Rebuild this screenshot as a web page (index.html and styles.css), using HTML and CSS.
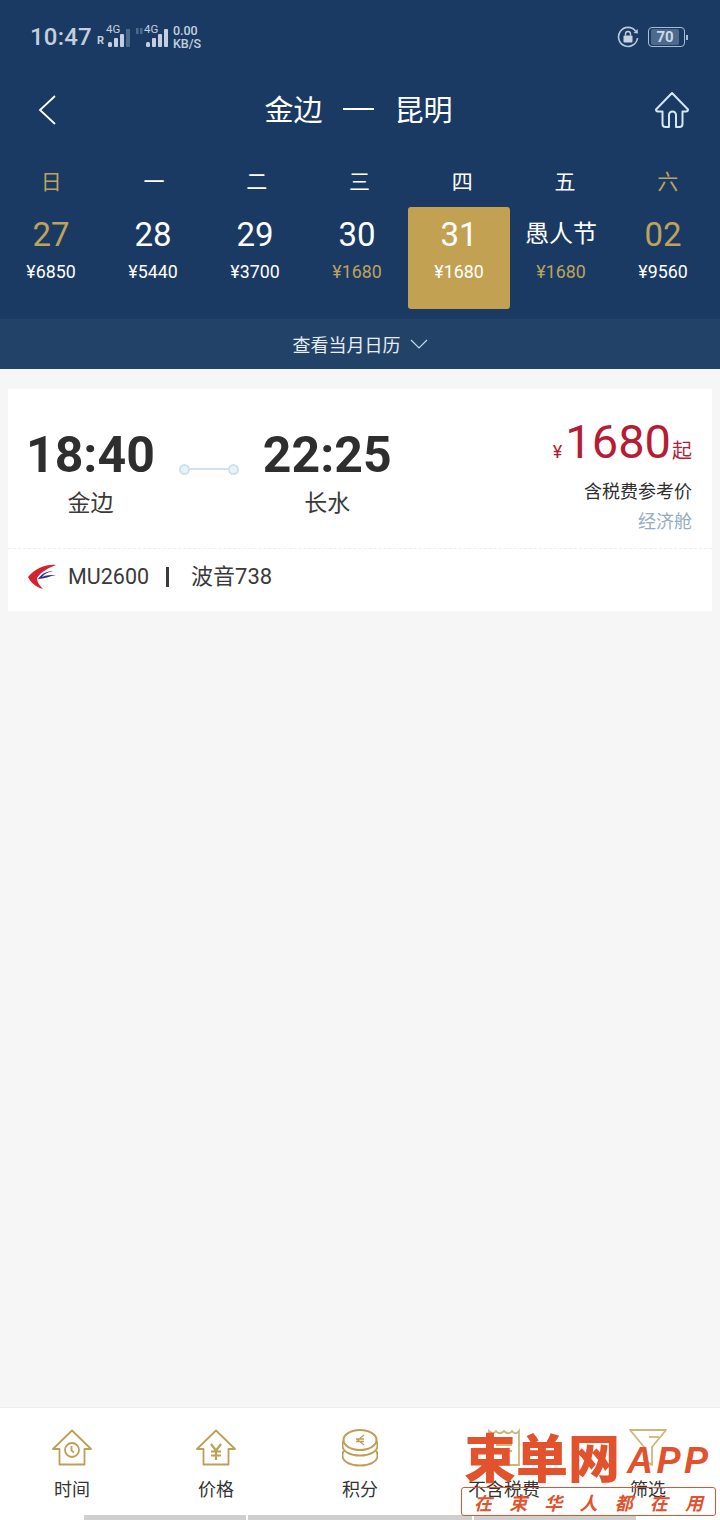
FILE: index.html
```html
<!DOCTYPE html>
<html lang="zh">
<head>
<meta charset="utf-8">
<title>金边 — 昆明</title>
<link rel="stylesheet" href="styles.css">
</head>
<body>
<div class="page">
  <header class="top">
    <div class="status">
      <div class="status-left">
        <span class="clock">10:47</span>
        <span class="roam">R</span>
        <span class="sig">
          <span class="sig-label">4G</span>
          <svg width="24" height="19" viewBox="0 0 24 19"><g fill="#c3cfde"><rect x="0" y="13" width="4" height="5" rx="1.500"/><rect x="6" y="9" width="4" height="9" rx="1"/><rect x="12" y="5" width="4" height="13" rx="1"/></g><rect x="18" y="0" width="4" height="18" rx="1" fill="#4d6a8d"/></svg>
        </span>
        <svg class="dim" width="9" height="18" viewBox="0 0 9 18"><g fill="#4d6a8d"><rect x="1" y="0" width="2.500" height="6"/><rect x="5" y="0" width="2.500" height="6"/></g></svg>
        <span class="sig">
          <span class="sig-label">4G</span>
          <svg width="24" height="19" viewBox="0 0 24 19"><g fill="#c3cfde"><rect x="0" y="13" width="4" height="5" rx="1.500"/><rect x="6" y="9" width="4" height="9" rx="1"/><rect x="12" y="5" width="4" height="13" rx="1"/><rect x="18" y="0" width="4" height="18" rx="1"/></g></svg>
        </span>
        <span class="speed"><span>0.00</span><span>KB/S</span></span>
      </div>
      <div class="status-right">
        <svg width="22" height="22" viewBox="0 0 22 22" fill="none"><path d="M18.500 5A9.500 9.500 0 1 0 20.500 12" stroke="#b9c9dc" stroke-width="1.600"/><path d="M16.500 7l4.500.5-.5-4.500z" fill="#b9c9dc"/><rect x="6.500" y="9.500" width="9" height="7" rx="1" fill="#c9d3e0"/><path d="M8.500 9.500V8a2.500 2.500 0 0 1 5 0v1.500" stroke="#c9d3e0" stroke-width="1.300"/></svg>
        <div class="battery"><span class="batt-fill">70</span></div><span class="batt-tip"></span>
      </div>
    </div>
    <nav class="nav">
      <svg class="back" width="20" height="32" viewBox="0 0 20 32" fill="none"><path d="M18 2L3 16l15 14" stroke="#fff" stroke-width="1.800"/></svg>
      <h1 class="route"><span>金边</span><span class="dash"></span><span>昆明</span></h1>
      <svg class="home" width="36" height="38" viewBox="0 0 36 38" fill="none" stroke="#d5e6f7" stroke-width="2" stroke-linejoin="round"><path d="M18 2L2 18.500c0 1.500 1 2 2 2h4.500V33c0 2 1 3 3 3h3.500V24a3.500 3.500 0 0 1 7 0v12h3.500c2 0 3-1 3-3V20.500H32c1 0 2-.5 2-2z"/></svg>
    </nav>
    <div class="week">
      <span class="gold">日</span><span>一</span><span>二</span><span>三</span><span>四</span><span>五</span><span class="gold">六</span>
    </div>
    <div class="dates">
      <div class="day"><span class="num gold">27</span><span class="fare">¥6850</span></div>
      <div class="day"><span class="num">28</span><span class="fare">¥5440</span></div>
      <div class="day"><span class="num">29</span><span class="fare">¥3700</span></div>
      <div class="day"><span class="num">30</span><span class="fare gold">¥1680</span></div>
      <div class="day selected"><span class="num">31</span><span class="fare">¥1680</span></div>
      <div class="day"><span class="num holiday">愚人节</span><span class="fare gold">¥1680</span></div>
      <div class="day"><span class="num gold">02</span><span class="fare">¥9560</span></div>
    </div>
    <div class="month">
      <span>查看当月日历</span>
      <svg width="18" height="11" viewBox="0 0 18 11" fill="none"><path d="M1 1l8 8 8-8" stroke="#c5d8ec" stroke-width="1.200"/></svg>
    </div>
  </header>

  <main class="list">
    <article class="card">
      <div class="card-main">
        <div class="stop">
          <span class="time">18:40</span>
          <span class="city">金边</span>
        </div>
        <div class="link"><i></i><b></b><i></i></div>
        <div class="stop">
          <span class="time">22:25</span>
          <span class="city">长水</span>
        </div>
        <div class="price">
          <div class="amount"><span class="yen">¥</span><span class="value">1680</span><span class="from">起</span></div>
          <div class="tax">含税费参考价</div>
          <div class="cabin">经济舱</div>
        </div>
      </div>
      <div class="card-foot">
        <svg width="28" height="26" viewBox="0 0 28 26"><path d="M28 1C18 0 8 4 0 13c3 6 8 10 15 12-3-3-6-7-6-11C13 8 20 4 28 1z" fill="#d3232e"/><path d="M10 15c4-6 10-8 15-8-5 1-9 3-11 6 4-2 9-2 14-2-6 1-12 4-18 4z" fill="#2d2f86"/></svg>
        <span>MU2600</span><span class="bar"></span><span class="plane">波音738</span>
      </div>
    </article>
  </main>

  <footer class="tabs">
    <div class="tab-row">
      <div class="tab">
        <svg class="tab-icon" width="40" height="38" viewBox="0 0 40 38" fill="none" stroke="#bd9f57" stroke-width="1.800" stroke-linejoin="round"><path d="M20 1.500L1 20h6.500v15.500h25V20H39z"/><circle cx="20" cy="21" r="7"/><path d="M19.500 17v4.500l2.500 2"/></svg>
        <span>时间</span>
      </div>
      <div class="tab">
        <svg class="tab-icon" width="40" height="38" viewBox="0 0 40 38" fill="none" stroke="#bd9f57" stroke-linejoin="round"><path stroke-width="1.800" d="M20 1.500L1 20h6.500v15.500h25V20H39z"/><path stroke-width="2.200" d="M15 15l5 6.500 5-6.500M20 21.500V31M15 22.500h10M15 26.500h10"/></svg>
        <span>价格</span>
      </div>
      <div class="tab">
        <svg class="tab-icon" width="36" height="38" viewBox="0 0 36 38" fill="none" stroke="#bd9f57" stroke-width="2"><ellipse cx="18" cy="11" rx="16.500" ry="10"/><path d="M1.500 12c-1 2-1 3-1 5 0 5.500 8 9.500 17.500 9.500S35.500 22.500 35.500 17c0-2 0-3-1-5M1.500 22c-1 2-1 3-1 5 0 5.500 8 9.500 17.500 9.500S35.500 32.500 35.500 27c0-2 0-3-1-5"/><path d="M22 6l-6 5 6 5M14 10h8M14 12.500h8" stroke-width="1.300"/></svg>
        <span>积分</span>
      </div>
      <div class="tab">
        <svg class="tab-icon" width="34" height="38" viewBox="0 0 34 38" fill="none" stroke="#cdb778" stroke-width="1.800"><path d="M2 2c3 3 5 3 7 0 2 3 5 3 8 0 3 3 6 3 8 0 2 3 5 3 7 0v34H2z"/><path d="M9 16h16M9 22h16"/></svg>
        <span>不含税费</span>
      </div>
      <div class="tab">
        <svg class="tab-icon" width="38" height="38" viewBox="0 0 38 38" fill="none" stroke="#cdb778" stroke-width="1.800" stroke-linejoin="round"><path d="M1 1h36L23 18v18l-8-5V18z"/><path d="M20 8h10"/></svg>
        <span>筛选</span>
      </div>
    </div>
    <div class="handle"><i></i><i class="wide"></i><i></i></div>
  </footer>

  <aside class="mark">
    <div class="mark-title"><span class="mark-cn">束单网</span><span class="mark-en">APP</span></div>
    <div class="mark-sub"><span>在</span><span>束</span><span>华</span><span>人</span><span>都</span><span>在</span><span>用</span></div>
  </aside>
</div>
</body>
</html>
```
FILE: styles.css
```css
* { box-sizing: border-box; }
html, body { margin: 0; padding: 0; }
body {
  width: 720px;
  height: 1520px;
  overflow: hidden;
  font-family: Roboto, "Noto Sans CJK SC", sans-serif;
}
.page {
  position: relative;
  width: 720px;
  height: 1520px;
  display: flex;
  flex-direction: column;
  background: #f6f6f6;
}
.top { background: #1a3a64; color: #fff; }
.gold { color: #bda35c; }

.status {
  height: 72px;
  display: flex;
  justify-content: space-between;
  align-items: center;
  padding: 2px 32px 0 30px;
  color: #c3cfde;
}
.status-left, .status-right { display: flex; align-items: center; }
.clock { font-size: 24px; font-weight: 500; letter-spacing: .2px; }
.roam { font-size: 11px; font-weight: 700; margin: 7px 2px 0 5px; }
.sig { position: relative; display: block; width: 26px; height: 19px; margin-top: 3px; }
.sig svg { position: absolute; left: 2px; top: 0; }
.sig-label { position: absolute; left: 0; top: -6px; font-size: 11.500px; line-height: 13px; }
.dim { margin: 0 0 0 3px; }
.speed {
  display: flex;
  flex-direction: column;
  font-size: 12.500px;
  font-weight: 500;
  line-height: 13px;
  margin-left: 3px;
}
.status-right svg { margin-right: 9px; }
.battery {
  width: 37px;
  height: 20px;
  border: 1px solid #a9bcd2;
  border-radius: 4px;
  padding: 1px;
}
.batt-fill {
  display: block;
  width: 28px;
  height: 16px;
  border-radius: 2px;
  background: #4d6a8d;
  color: #cdd8e5;
  font-size: 15px;
  font-weight: 700;
  line-height: 16px;
  text-align: center;
  margin-left: 1px;
}
.batt-tip { width: 2px; height: 5px; background: #a9bcd2; margin-left: 1px; }

.nav {
  height: 76px;
  display: flex;
  align-items: center;
  justify-content: space-between;
  padding: 0 30px 0 37px;
}
.route {
  margin: 0;
  display: flex;
  align-items: center;
  font-size: 29px;
  font-weight: 400;
  line-height: 40px;
  position: relative;
  left: 3px;
  top: 1px;
}
.dash { width: 31px; height: 2px; background: #fff; margin: 0 21px 0 20px; position: relative; top: -2px; }

.week {
  display: grid;
  grid-template-columns: repeat(7, 1fr);
  height: 59px;
  padding: 19px 1px 0 0;
  font-size: 21px;
  line-height: 30px;
  text-align: center;
}
.dates { display: flex; }
.day {
  width: 102px;
  height: 102px;
  display: flex;
  flex-direction: column;
  align-items: center;
  border-radius: 3px;
}
.selected { background: #c2a252; }
.num { font-size: 33px; line-height: 55px; height: 54px; }
.holiday { font-size: 24px; }
.fare { font-size: 17.800px; line-height: 22px; }

.month {
  margin-top: 10px;
  height: 50px;
  background: #234268;
  display: flex;
  align-items: center;
  justify-content: center;
  gap: 9px;
  font-size: 18px;
  color: #e6edf5;
}

.list { flex: 1; padding: 20px 8px 0; }
.card { background: #fff; height: 222px; }
.card-main {
  height: 160px;
  display: flex;
  padding: 0 20px 0 18px;
  border-bottom: 1px dashed #eeeeee;
  color: #2e2e2e;
}
.stop { display: flex; flex-direction: column; align-items: center; padding-top: 35px; }
.time { font-size: 50px; font-weight: 700; line-height: 62px; }
.city { font-size: 23px; line-height: 32px; color: #3a3a3a; margin-top: 2px; }
.link { display: flex; align-items: center; width: 60px; height: 16px; margin: 72px 24px 0 24px; }
.link i { width: 11px; height: 11px; border: 2px solid #cfe0ee; border-radius: 50%; background: #eaf2f8; flex: none; }
.link b { flex: 1; height: 2px; background: #d5e2ec; }
.price { margin-left: auto; display: flex; flex-direction: column; align-items: flex-end; padding-top: 22px; }
.amount { display: flex; align-items: baseline; color: #b71c35; height: 62px; }
.yen { font-size: 18px; margin-right: 3px; }
.value { font-size: 47px; line-height: 62px; }
.from { font-size: 20px; margin-left: 1px; }
.tax { font-size: 18px; line-height: 26px; color: #2e2e2e; margin-top: 6px; }
.cabin { font-size: 18px; line-height: 26px; color: #93adc3; margin-top: 4px; }
.card-foot {
  height: 61px;
  display: flex;
  align-items: center;
  padding: 0 0 5px 20px;
  font-size: 21.500px;
  color: #3a3a3a;
}
.card-foot span { line-height: 26px; height: 26px; }
.card-foot svg { margin-right: 12px; }
.card-foot .bar { width: 3px; height: 20px; background: #3a3a3a; margin: 0 22px 0 17px; }
.card-foot .plane { font-size: 22px; }

.tabs {
  height: 113px;
  background: #fff;
  border-top: 1px solid #ececec;
  display: flex;
  flex-direction: column;
}
.tab-row { flex: 1; display: flex; }
.tab {
  width: 144px;
  display: flex;
  flex-direction: column;
  align-items: center;
  padding-top: 20px;
  font-size: 18px;
  color: #333;
}
.tab-icon { height: 40px; }
.tab span { line-height: 26px; margin-top: 9px; }
.handle { height: 5px; display: flex; gap: 2px; padding-left: 84px; }
.handle i { width: 162px; background: #cfcfcf; }
.handle i.wide { width: 224px; }

.mark {
  position: absolute;
  left: 461px;
  top: 1434px;
  width: 255px;
  color: #e2522d;
}
.mark-title { display: flex; align-items: center; height: 53px; padding-left: 3px; }
.mark-cn { font-size: 52px; line-height: 53px; font-weight: 900; }
.mark-en { font-size: 36px; line-height: 53px; font-weight: 700; font-style: italic; letter-spacing: 3.500px; margin-left: 7px; font-family: "Liberation Sans", sans-serif; }
.mark-sub {
  height: 29px;
  border: 1px solid #e2522d;
  border-radius: 3px;
  display: flex;
  justify-content: space-between;
  align-items: center;
  padding: 0 12px;
  font-size: 18px;
  font-weight: 700;
  font-style: italic;
}
```
